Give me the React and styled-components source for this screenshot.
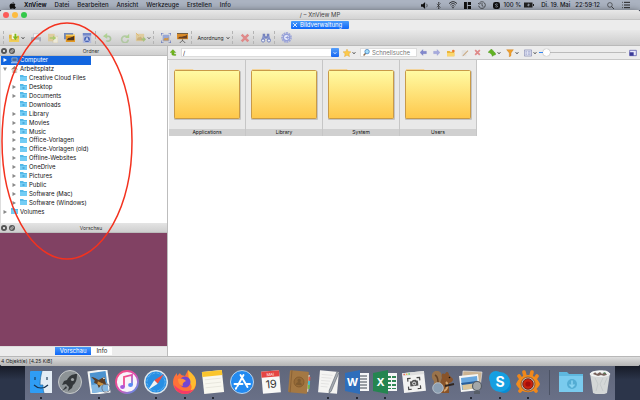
import React from 'react';
import styled, {createGlobalStyle} from 'styled-components';

const GlobalStyle = createGlobalStyle`
  * {
    box-sizing: border-box;
  }
  body {
    margin: 0;
    background: #2b3347;
    color: #222;
    font: 6px/8px Inter, 'Liberation Sans', sans-serif;
  }
  button, input {
    font: inherit;
    color: inherit;
    border: 0;
    padding: 0;
    margin: 0;
    background: none;
  }
  svg {
    display: block;
    flex: none;
  }
`;

const Screen = styled.div`
  position: relative;
  min-height: 100vh;
  display: flex;
  flex-direction: column;
  overflow: hidden;
`;
const MenuBar = styled.nav`
  height: 10px;
  display: flex;
  align-items: center;
  justify-content: space-between;
  padding: 0 10px 0 9px;
  background: #abb3c1;
  color: #14161c;
`;
const MenuGroup = styled.div`
  display: flex;
  align-items: center;
  gap: ${p => p.$gap || 8}px;
`;
const MenuItem = styled.button`
  font-weight: ${p => (p.$strong ? 700 : 500)};
  white-space: nowrap;
`;
const StatusText = styled.span`
  font-weight: 500;
  white-space: nowrap;
`;
const Window = styled.main`
  flex: 1;
  display: flex;
  flex-direction: column;
  background: #ececec;
  border-radius: 3px;
  overflow: hidden;
  box-shadow: 0 2px 8px #000a;
`;
const TitleBar = styled.header`
  height: 10px;
  display: grid;
  grid-template-columns: 1fr auto 1fr;
  align-items: center;
  padding: 0 3px;
  background: linear-gradient(#e8e8e8, #d3d3d3);
  border-bottom: 1px solid #c4c4c4;
`;
const Lights = styled.div`
  display: flex;
  gap: 3px;
`;
const Light = styled.button`
  width: 6px;
  height: 6px;
  border-radius: 50%;
  background: ${p => p.color};
`;
const Title = styled.h1`
  margin: 0;
  font-size: 6px;
  font-weight: 400;
  color: #444;
`;
const TabRow = styled.div`
  height: 10px;
  display: flex;
  justify-content: center;
  padding-top: 1px;
`;
const DocumentTab = styled.button`
  width: 58px;
  height: 8px;
  display: flex;
  align-items: center;
  gap: 3px;
  padding: 0 2px;
  border-radius: 1px;
  background: linear-gradient(#4a9cfb, #0f67f8);
  color: #fff;
`;
const Toolbar = styled.div`
  height: 16px;
  display: flex;
  align-items: center;
  padding-left: 3px;
  background: linear-gradient(#e9e9e9, #cccccc);
  border-bottom: 1px solid #b9b9b9;
`;
const Tool = styled.button`
  width: ${p => p.$width || 17}px;
  height: 12px;
  flex: none;
  display: flex;
  align-items: center;
  justify-content: center;
  gap: 1px;
  opacity: ${p => (p.$faded ? 0.7 : 1)};
`;
const ArrangeTool = styled(Tool)`
  font-size: 5px;
  gap: 2px;
`;
const Separator = styled.span`
  width: 4px;
  height: 13px;
  flex: none;
  border-left: 1px dashed #b4b4b4;
`;
const Body = styled.div`
  flex: 1;
  display: flex;
`;
const Sidebar = styled.aside`
  flex: 0 0 168px;
  display: flex;
  flex-direction: column;
  border-right: 1px solid #bdbdbd;
`;
const PanelTitle = styled.div`
  height: 10px;
  display: grid;
  grid-template-columns: 14px 1fr;
  align-items: center;
  padding-left: 1px;
  background: linear-gradient(#e4e4e4, #cfcfcf);
  border-bottom: 1px solid #bcbcbc;
`;
const PanelButtons = styled.div`
  display: flex;
  gap: 2px;
`;
const PanelName = styled.h2`
  margin: 0;
  text-align: center;
  font-size: 5px;
  font-weight: 400;
  color: #333;
`;
const TreeArea = styled.div`
  flex: 1;
  background: #fff;
  border-left: 1px solid #ddd;
`;
const Tree = styled.ul`
  height: 160px;
  width: 90px;
  margin: 0;
  padding: 0;
  list-style: none;
  display: grid;
  grid-auto-rows: 1fr;
`;
const TreeRow = styled.li`
  display: flex;
  background: ${p => (p.$selected ? '#1265df' : 'none')};
  color: ${p => (p.$selected ? '#fff' : '#111')};
`;
const TreeButton = styled.button`
  flex: 1;
  display: grid;
  grid-template-columns: 9px 8px 1fr;
  align-items: center;
  column-gap: 1px;
  padding-left: ${p => p.$level * 9}px;
  text-align: left;
  white-space: nowrap;
`;
const Preview = styled.div`
  height: 113px;
  background: #814163;
`;
const PreviewTabs = styled.div`
  height: 10px;
  display: flex;
  justify-content: center;
  align-items: flex-start;
  border-top: 1px solid #ddd;
`;
const PreviewTab = styled.button`
  height: 8px;
  padding: 0 5px;
  background: ${p => (p.$active ? 'linear-gradient(#4a9cfb, #0f67f8)' : '#fff')};
  color: ${p => (p.$active ? '#fff' : '#222')};
`;
const Browser = styled.section`
  flex: 1;
  min-width: 0;
  display: flex;
  flex-direction: column;
  background: #fff;
`;
const AddressBar = styled.div`
  height: 14px;
  display: flex;
  align-items: center;
  background: #ececec;
  border-bottom: 1px solid #c8c8c8;
`;
const PathBox = styled.div`
  flex: 1;
  height: 9px;
  margin-left: 3px;
  display: flex;
  background: #fff;
  border: 1px solid #dcdcdc;
`;
const PathInput = styled.input`
  flex: 1;
  min-width: 0;
  padding-left: 1px;
  outline: 0;
`;
const PathButton = styled.button`
  width: 8px;
  margin: -1px;
  display: grid;
  place-items: center;
  border-radius: 1px;
  background: linear-gradient(#569ffa, #1767f3);
  color: #fff;
`;
const SearchBox = styled.label`
  width: 57px;
  height: 9px;
  display: flex;
  align-items: center;
  gap: 2px;
  padding-left: 2px;
  background: #fff;
  border: 1px solid #dcdcdc;
`;
const SearchInput = styled.input`
  width: 43px;
  outline: 0;
  &::placeholder {
    color: #777;
    opacity: 1;
  }
`;
const SizeSlider = styled.input`
  appearance: none;
  width: 87px;
  height: 7px;
  background: linear-gradient(#2f86f6, #2f86f6) 0 3px / 8px 1px no-repeat,
    linear-gradient(#bbb, #bbb) 0 3px / 100% 1px no-repeat;
  &::-webkit-slider-thumb {
    appearance: none;
    width: 7px;
    height: 7px;
    border-radius: 50%;
    background: #fff;
    box-shadow: 0 0 1px #777;
  }
`;
const FileGrid = styled.div`
  display: flex;
  flex-wrap: wrap;
  padding-left: 1px;
`;
const FileCell = styled.button`
  width: 77px;
  height: 76px;
  display: flex;
  flex-direction: column;
  align-items: center;
  padding-top: 8px;
  background: #e9e9e9;
  border-right: 1px solid #c6c6c6;
`;
const FileName = styled.span`
  width: 100%;
  height: 7px;
  margin-top: auto;
  background: #d0d0d0;
  color: #111;
  font-size: 5px;
  line-height: 7px;
  text-align: center;
`;
const StatusBar = styled.footer`
  height: 10px;
  padding-left: 1px;
  background: linear-gradient(#dedede, #b3b3b3);
  border-top: 1px solid #b8b8b8;
  font-size: 5px;
`;
const DockArea = styled.div`
  height: 34px;
  padding: 0 25px;
  background: linear-gradient(#171b27, #2c354a 14px);
`;
const Dock = styled.div`
  height: 34px;
  display: flex;
  position: relative;
  padding: 0 1px 0 2px;
  background: linear-gradient(#5f667a, #697087);
`;
const DockItem = styled.button`
  flex: 1;
  display: flex;
  flex-direction: column;
  align-items: center;
  justify-content: space-between;
  padding: 4px 0 1px;
`;
const DockDot = styled.span`
  width: 2px;
  height: 2px;
  border-radius: 50%;
  background: ${p => (p.$running ? '#10131b' : 'transparent')};
`;
const DockDivider = styled.span`
  width: 14px;
  margin: 4px 0 5px;
  display: flex;
  justify-content: center;
  &::before {
    content: '';
    border-left: 1px solid #4b5264;
  }
`;
// hand-drawn ring, lies over both side panels
const Ring = styled.svg`
  position: absolute;
  left: 0;
  top: 20px;
  pointer-events: none;
`;

function Icon({size = 10, box = 12, children}) {
  return (
    <svg width={size} height={size} viewBox={`0 0 ${box} ${box}`} fill="none" aria-hidden="true">
      {children}
    </svg>
  );
}
function Chevron() {
  return (
    <svg width="4" height="4" viewBox="0 0 4 4" fill="none" stroke="currentColor" aria-hidden="true">
      <path d="M.7 1.3 2 2.7 3.3 1.3" strokeWidth=".9" />
    </svg>
  );
}

const glyphs = {
  open: <><path d="M0 3h4l1 1h6v7H0z" fill="#dfb23f" /><path d="M3 1h6v7H3z" fill="#f4f3e5" /><path d="M6 2v3H4l3 4 3-4H8V2z" fill="#7eb81d" /><path d="M0 7h2v2h7V7h2v4H0z" fill="#f2cf58" /></>,
  print: <><path d="M3 1h6v5H3z" fill="#fff" stroke="#8f95a8" strokeWidth=".5" /><path d="M0 5h12v5H0z" fill="#9296a8" /><path d="M2 8h8v3H2z" fill="#e5e6ef" /></>,
  acquire: <><path d="M0 1h8v9H0z" fill="#e0c583" /><path d="M6 4h6v8H6z" fill="#f8f2dd" stroke="#c9b47b" strokeWidth=".5" /><path d="M2 5h4V3l4 3-4 3V7H2z" fill="#99c443" /></>,
  batch: <><path d="M0 1h10v7H0z" fill="#7189b9" /><path d="M2 3h10v8H2z" fill="#e49923" /><path d="M3 9c2-4 3-2 4-3s2 0 4-2v5z" fill="#4c351f" /><path d="M2 3h10v1H2z" fill="#ffe06b" /></>,
  rename: <><path d="M1 0h10v12H1z" fill="#b2badd" /><path d="M1 0h10v3H1z" fill="#7288c8" /><circle cx="6" cy="7.5" r="3.4" fill="#4965b8" /><path d="m4.5 9.5 1.5-4 1.5 4M5 8.3h2" stroke="#fff" strokeWidth=".8" /></>,
  undo: <><path d="M4 4h3a3 3 0 1 1-3 5" stroke="#9bbd87" strokeWidth="2" /><path d="M5 0v7L0 4z" fill="#9ccc73" /></>,
  redo: <><path d="M9 5A4 4 0 1 0 10 8" stroke="#a3c48e" strokeWidth="2" /><path d="M11 1v5H6z" fill="#9ccc73" /></>,
  convert: <><path d="M1 2h9v8H1z" fill="#dfc584" /><path d="M2 8c2-4 3-1 4-3l4 4H2z" fill="#c99f58" /><path d="M7 7h2V5l3 3-3 3V9H7z" fill="#8fb955" /><path d="m1 1 3 3" stroke="#e2a33c" /></>,
  full: <><path d="M2 2h8v8H2z" fill="#98a7d5" /><path d="M3 8c2-4 3 0 6-3v4H3z" fill="#cf9749" /><path d="M0 3V0h3M9 0h3v3M12 9v3H9M3 12H0V9" stroke="#5a6fbe" strokeWidth="1.4" /></>,
  slides: <><path d="M0 1h12v7H0z" fill="#d98a27" /><path d="M0 1h12v1H0z" fill="#53504d" /><path d="M1 7c2-3 4-1 5-2s3 0 5-2v4z" fill="#684023" /><path d="M6 8v2M3 12l3-3 3 3" stroke="#626262" /></>,
  remove: <path d="m2 2 8 8M10 2l-8 8" stroke="#df8a8a" strokeWidth="3" />,
  find: <><path d="M2 1h3v5H2zM7 1h3v5H7zM5 4h2v3H5z" fill="#7482bd" /><path d="M0 9 2 4h2l1 5zM7 9l1-5h2l2 5z" fill="#8b98cf" /><circle cx="2.5" cy="9" r="1.9" fill="#e8ebfa" stroke="#6878b8" /><circle cx="9.5" cy="9" r="1.9" fill="#e8ebfa" stroke="#6878b8" /></>,
  gear: <><circle cx="6" cy="6" r="4.8" stroke="#a0a8d8" strokeWidth="2.2" strokeDasharray="2 .7" /><circle cx="6" cy="6" r="3.4" fill="#e9ecfc" stroke="#949fda" strokeWidth="1.4" /><path d="M5 6h3M6.5 4.5 8 6 6.5 7.5" stroke="#8994d4" /></>,
  up: <path d="M5 1 0 6h3v3c0 2 3 2 7 2V9H7V6h3z" fill="#71b51d" stroke="#4a8a16" strokeWidth=".5" />,
  star: <path d="m6 0 1.8 3.8 4.2.5L9 7.2l.8 4.3L6 9.4l-3.8 2.1L3 7.2 0 4.3l4.2-.5z" fill="#fbc94b" stroke="#da9a29" strokeWidth=".5" />,
  zoom: <><path d="m1 11 4-4" stroke="#8d6a48" strokeWidth="2.4" /><circle cx="7" cy="4.5" r="3.8" fill="#a4ddf8" stroke="#3879bd" strokeWidth="1.2" /></>,
  back: <path d="M0 6 5 1v3h6v4H5v3z" fill="#8288cd" stroke="#6870b6" strokeWidth=".5" />,
  next: <path d="M12 6 7 1v3H1v4h6v3z" fill="#a6aadd" stroke="#8b91cc" strokeWidth=".5" />,
  folder: <><path d="M0 3h4l1 1h6v7H0z" fill="#eab63d" /><path d="M0 6h11v5H0z" fill="#fbd76f" /><circle cx="9.5" cy="3" r="2" fill="#ec7a2e" /></>,
  edit: <><path d="M1 2h7v9H1z" fill="#e2e2e2" /><path d="m3 9 7-7 1 1-7 7-2 1z" fill="#c9a67c" /></>,
  sort: <path d="m5 0-5 5 3 1 3 3v2l6-3-2-3-1-1-2-2z" fill="#62b223" stroke="#43881a" strokeWidth=".5" />,
  filter: <path d="M1 1h10L7.5 6v4L5 12V6z" fill="#f0a02b" stroke="#c77818" strokeWidth=".6" />,
  list: <><path d="M.5 1.5h11v9H.5z" fill="#eef0fb" stroke="#777ca8" /><path d="M2 4h3M6 4h4M2 6h3M6 6h4M2 8h3M6 8h4" stroke="#747bb1" strokeWidth=".8" /></>,
  panel: <><path d="M1 2h10v8H1z" fill="#e8e8fb" stroke="#4545a0" /><path d="M1 5h6v5H1z" fill="#3a3a98" /></>,
};

function Glyph({name, size}) {
  return <Icon size={size}>{glyphs[name]}</Icon>;
}

const tree = [
  {name: 'Computer', level: 0, arrow: 'right', icon: 'computer', selected: true},
  {name: 'Arbeitsplatz', level: 0, arrow: 'down', icon: 'home'},
  {name: 'Creative Cloud Files', level: 1},
  {name: 'Desktop', level: 1, arrow: 'right', mark: true},
  {name: 'Documents', level: 1, arrow: 'right', mark: true},
  {name: 'Downloads', level: 1, mark: true},
  {name: 'Library', level: 1, arrow: 'right', mark: true},
  {name: 'Movies', level: 1, arrow: 'right', mark: true},
  {name: 'Music', level: 1, arrow: 'right', mark: true},
  {name: 'Office-Vorlagen', level: 1, arrow: 'right'},
  {name: 'Office-Vorlagen (old)', level: 1, arrow: 'right'},
  {name: 'Offline-Websites', level: 1, arrow: 'right'},
  {name: 'OneDrive', level: 1, arrow: 'right', mark: true},
  {name: 'Pictures', level: 1, arrow: 'right', mark: true},
  {name: 'Public', level: 1, arrow: 'right', mark: true},
  {name: 'Software (Mac)', level: 1, arrow: 'right'},
  {name: 'Software (Windows)', level: 1, arrow: 'right'},
  {name: 'Volumes', level: 0, arrow: 'right'},
];

function TreeIcon({icon, mark}) {
  if (icon === 'computer') {
    return <Icon size={7} box={8}><path d="M1 1h6v4H1z" fill="#476b9c" stroke="#c2d4ee" strokeWidth=".6" /><path d="M0 6h8v1H0z" fill="#c2d4ee" /></Icon>;
  }
  if (icon === 'home') {
    return <Icon size={7} box={8}><path d="M0 4 4 0l4 4z" fill="#9c8072" /><path d="M1 4h6v4H1z" fill="#d9d4cb" /><path d="M3 5h2v3H3z" fill="#8a7566" /></Icon>;
  }
  return (
    <Icon size={7} box={7}>
      <path d="M0 0h3l1 1h3v5H0z" fill="#55b9e8" />
      <path d="M0 2h7v4H0z" fill="#74cdf5" />
      {mark && <path d="M2.500 3h2v2h-2z" fill="#4fabdc" />}
    </Icon>
  );
}
function TreeArrow({arrow, selected}) {
  if (!arrow) return <span />;
  return (
    <Icon size={8} box={8}>
      <path d={arrow === 'down' ? 'M2 2.5h4L4 6z' : 'M2.5 2v4L6 4z'} fill={selected ? '#fff' : '#888'} />
    </Icon>
  );
}
function PanelHeader({name}) {
  return (
    <PanelTitle>
      <PanelButtons>
        <button aria-label={name + ' schließen'}>
          <Icon size={6}><circle cx="6" cy="6" r="6" fill="#555" /><path d="m4 4 4 4M8 4l-4 4" stroke="#fff" strokeWidth="1.5" /></Icon>
        </button>
        <button aria-label={name + ' lösen'}>
          <Icon size={6}><circle cx="6" cy="6" r="6" fill="#555" /><path d="M3.5 5.5h3v3h-3zM5.5 3.5h3v3" stroke="#fff" /></Icon>
        </button>
      </PanelButtons>
      <PanelName>{name}</PanelName>
    </PanelTitle>
  );
}
function BigFolder() {
  return (
    <svg width="68" height="53" viewBox="0 0 68 53" aria-hidden="true">
      <defs>
        <linearGradient id="folder" x2="0" y2="1">
          <stop stopColor="#fffba4" />
          <stop offset="1" stopColor="#fec74a" />
        </linearGradient>
      </defs>
      <path d="M2 3V1h18l1 2z" fill="#f3d49c" />
      <rect x="1" y="3" width="67" height="49" rx="1" fill="#aaa" opacity=".6" />
      <rect x="1.5" y="2.5" width="65" height="48" rx="1" fill="url(#folder)" stroke="#c89a48" />
    </svg>
  );
}

const dockIcons = [
  {name: 'Finder', running: true, art: <><rect x="1" y="1" width="22" height="22" rx="1" fill="#2f9df4" /><path d="M13 1h10v22h-8c-1-3-1-6-1-8h-3c0-6 1-10 2-14z" fill="#e4edf5" /><path d="M6 7v3M18 7v3M5 15c4 4 10 4 14 0" stroke="#17334f" strokeWidth="1.1" /><path d="M13 1c-1 4-2 8-2 14h3c0 2 0 5 1 8" stroke="#26689e" strokeWidth=".7" /></>},
  {name: 'Launchpad', art: <><circle cx="12" cy="12" r="11.5" fill="#8d9396" stroke="#c6c9cb" /><path d="M19 4c-5 0-8 2-10 6l-3 1-2 4 4-1 3 3-1 4 4-3 1-3c3-2 4-6 4-11z" fill="#34383b" /><circle cx="14.5" cy="9.5" r="1.6" fill="#9ca1a3" /><path d="m8 16-4 5 5-3z" fill="#34383b" /></>},
  {name: 'Mail', running: true, art: <g transform="rotate(-8 12 12)"><path d="M2 0h20v24H2z" fill="#f4f5f4" /><path d="M4 2h16v20H4z" fill="#4c93cf" /><path d="M4 14h16v8H4z" fill="#86b9e2" /><path d="M5 6c3 0 5 3 7 4l5-2c2 0 2 2 1 3l1 5-4-2-4 4-1-4-3-2 1-2z" fill="#5a3d25" /><path d="m11 11 6 4-4 1-3-2z" fill="#c8913f" /><path d="m16 8 3 1-2 1z" fill="#f2eee2" /><circle cx="18" cy="19" r="4" stroke="#626a7d" strokeWidth=".8" /></g>},
  {name: 'iTunes', art: <><circle cx="12" cy="12" r="11" fill="#f9f4fa" stroke="url(#tunes)" strokeWidth="1.8" /><path d="M9 17V7l8-2v10" stroke="url(#tunes)" strokeWidth="1.8" /><ellipse cx="7.5" cy="17" rx="2.4" ry="1.9" fill="#a659db" /><ellipse cx="15.5" cy="15" rx="2.4" ry="1.9" fill="#5a8cf4" /></>},
  {name: 'Safari', running: true, art: <><circle cx="12" cy="12" r="11.3" fill="#278fe4" stroke="#dce4ea" strokeWidth="1.5" /><circle cx="12" cy="12" r="9" stroke="#9ad0f5" strokeWidth="1.2" strokeDasharray=".4 1" /><path d="m20 4-6.3 9.7-3.4-3.4z" fill="#f04d42" /><path d="m4 20 6.3-9.7 3.4 3.4z" fill="#f0f2f3" /></>},
  {name: 'Firefox', running: true, art: <><path d="M15 0c2 3 7 6 8 11 1 7-4 13-11 13S0 19 0 12c0-4 2-7 4-9v3l3-3c1 3 3 2 5 3z" fill="#ff7139" /><path d="M15 0c3 3 8 6 8 12 0 5-3 9-7 11 4-5 3-8 0-11z" fill="#ffbd2e" /><path d="M1 15c1 6 6 9 11 9 4 0 7-2 9-5-8 4-14 2-20-4z" fill="#f43b68" /><circle cx="12" cy="12" r="5.5" fill="#7446cf" /><path d="M5 9c4-1 6 0 8 2-3 1-4 3-3 5-3 0-5-3-5-7z" fill="#ff9238" /></>},
  {name: 'Notizen', running: true, art: <g transform="rotate(-6 12 12)"><path d="M2 1h20v22H2z" fill="#f8f7ef" /><path d="M2 1h20v5H2z" fill="#fac52d" /><path d="M4 9h16M4 13h16M4 17h16" stroke="#d8d6cc" strokeWidth=".5" /></g>},
  {name: 'App Store', art: <><circle cx="12" cy="12" r="11.5" fill="#238af0" stroke="#dceaf5" strokeWidth=".8" /><path d="m13.5 5-6 11M10.5 5l7 12M4.5 14h8M16 14h4M6.5 17.5l-.7 1.2" stroke="#fff" strokeWidth="1.9" strokeLinecap="round" /></>},
  {name: 'Kalender', art: <g transform="rotate(-5 12 12)"><path d="M3 1h18v22H3z" fill="#f8f8f6" /><path d="M3 1h18v6H3z" fill="#e54542" /><text x="12" y="6" fontSize="4" textAnchor="middle" fill="#fff">MAI</text><text x="12" y="18" fontSize="11" textAnchor="middle" fill="#333">19</text></g>},
  {name: 'Kontakte', art: <g transform="rotate(5 12 12)"><path d="M20 4h2v17h-2z" fill="#f2eee4" /><path d="M21 6h2v4h-2z" fill="#e05b47" /><path d="M21 10h2v4h-2z" fill="#48bdd0" /><path d="M21 14h2v4h-2z" fill="#75bd4c" /><rect x="2" y="1" width="19" height="22" rx="1" fill="#a47843" /><path d="M4 1v22" stroke="#805a30" strokeWidth=".7" /><circle cx="12" cy="12" r="5" fill="#966b38" stroke="#775126" strokeWidth=".6" /><circle cx="12" cy="10.5" r="1.7" fill="#7f5b30" /><path d="M9 15c0-4 6-4 6 0z" fill="#7f5b30" /></g>},
  {name: 'TextEdit', running: true, art: <g transform="rotate(5 12 12)"><path d="M3 1h19v22H3z" fill="#f4f4f2" /><path d="M5 5h11M5 8h10M5 11h9M5 14h8M5 17h7" stroke="#d2d2d2" strokeWidth=".5" /><path d="m20 1 2 1-6 19-2 2v-3z" fill="#a6abb2" stroke="#5d6670" strokeWidth=".6" /></g>},
  {name: 'Word', running: true, art: <><path d="M13 3h11v18H13z" fill="#f4f5f6" /><path d="M14 6h8M14 9h8M14 12h8M14 15h8M14 18h8" stroke="#414852" strokeWidth="1" /><path d="m0 3 15-3v24L0 21z" fill="#2e6ebb" /><text x="7.5" y="16" fontSize="11" fontWeight="700" textAnchor="middle" fill="#fff">W</text></>},
  {name: 'Excel', running: true, art: <><path d="M13 3h11v18H13z" fill="#f4f5f6" /><path d="M15 6h3v2h-3zM19 6h4v2h-4zM15 10h3v2h-3zM19 10h4v2h-4zM15 14h3v2h-3zM19 14h4v2h-4zM15 18h3v1h-3zM19 18h4v1h-4z" fill="#318754" /><path d="m0 3 15-3v24L0 21z" fill="#258550" /><text x="7.5" y="16" fontSize="11" fontWeight="700" textAnchor="middle" fill="#fff">X</text></>},
  {name: 'Bildschirmfoto', art: <g transform="rotate(-6 12 12)"><path d="M1 2h22v20H1z" fill="#f2f2f1" /><path d="M1 2h22v3H1z" fill="#dedede" /><circle cx="3" cy="3.5" r=".8" fill="#ef594f" /><circle cx="5.5" cy="3.5" r=".8" fill="#f3bc36" /><circle cx="8" cy="3.5" r=".8" fill="#4fc849" /><path d="M6 11V8h3M15 8h3v3M18 16v3h-3M9 19H6v-3" stroke="#464646" strokeWidth="1.2" /><path d="M8 11h2l1-1h3l1 1h1v5H8z" fill="#555" /><circle cx="12" cy="13.5" r="1.5" stroke="#fff" strokeWidth=".8" /></g>},
  {name: 'SquirrelMail', art: <><path d="M8 23C1 18 3 14 3 11-1 7 1 0 6 1c6 0 5 7 4 10z" fill="#99734b" /><path d="M4 5c4 2 2 6 4 11" stroke="#624227" strokeWidth="1.5" /><path d="M11 8c-1-5 1-5 3-4 2-4 4-1 4 1l4 4c0 3-3 4-4 4v10H8c0-6 1-10 3-15z" fill="#885329" /><path d="M15 12c3 3 1 8-2 9" stroke="#d4a56d" strokeWidth="2" /><circle cx="18.5" cy="7.5" r=".8" fill="#19120c" /><path d="m14 16 9-2" stroke="#30251f" strokeWidth="2" /><circle cx="7" cy="18" r="5.3" fill="#8c9fb2" stroke="#c1ccd4" strokeWidth=".8" /></>},
  {name: 'Vorschau', running: true, art: <><path d="m4 1 19 1-2 16-18-2z" fill="#cbb392" stroke="#eee" strokeWidth=".6" /><path d="m0 6 19-2 2 16-19 2z" fill="#f6f6f4" /><path d="m2 8 16-2 1 12-16 2z" fill="#67a7df" /><path d="m3 14 16-2v6L4 20z" fill="#dbc69a" /><path d="m2 13 16-2v2L3 15z" fill="#285f9b" /><circle cx="18" cy="16" r="4.5" fill="#a3a7a9" stroke="#555c66" strokeWidth="1.2" /><path d="M15 21h6v3h-6z" fill="#575e68" /></>},
  {name: 'Skype', running: true, art: <><circle cx="8" cy="8" r="7" fill="#16a0e2" /><circle cx="16" cy="16" r="7" fill="#078cd4" /><circle cx="12" cy="12" r="10" fill="#159fe1" /><text x="12" y="17" fontSize="14" fontWeight="700" textAnchor="middle" fill="#fff">S</text></>},
  {name: 'XnView', running: true, art: <><path d="M5 9 3 6M9 6 8 2M15 6l1-4M19 9l2-3M6 19l-2 2M18 19l2 2" stroke="#f0871a" strokeWidth="3.6" strokeLinecap="round" /><path d="M0 14c5-12 19-12 24 0-5 11-19 11-24 0z" fill="#f28c1c" /><circle cx="12" cy="14" r="7" fill="#b9b3b0" stroke="#8a4a1c" strokeWidth=".8" /><circle cx="12" cy="14" r="5.2" fill="#c9230f" stroke="#7a2413" strokeWidth="1" /><circle cx="12" cy="14" r="2.6" fill="#a40d0b" /></>},
];
const dockPlaces = [
  {name: 'Downloads', art: <><path d="M0 4V2h8l2 2h14v18H0z" fill="#5eb7de" /><path d="M0 6h24v16H0z" fill="#7acbee" /><circle cx="13" cy="14" r="5" fill="#54add4" /><path d="M13 10.5v6M10.5 14.5l2.5 2.5 2.5-2.5" stroke="#89d4f2" strokeWidth="1.5" /></>},
  {name: 'Papierkorb', art: <><path d="M2 3h20l-3 20c-4 2-10 2-14 0z" fill="#d4d7d7" /><path d="M3 3c1-3 17-4 18 0l-1 3H4z" fill="#eceeed" /><path d="m5 4 2-2 2 2 3-2 2 2 3-2 2 3-3 1-3-1-3 1z" fill="#77625b" /><path d="m15 3 2-1 1 2z" fill="#408653" /><path d="m7 8 3 6-2 7M15 8l-3 6 3 7M19 8l-3 7" stroke="#c0c5c6" strokeWidth=".8" /><ellipse cx="12" cy="4" rx="10" ry="2.5" stroke="#f9fafa" strokeWidth=".8" /></>},
];

function DockEntry({item}) {
  return (
    <DockItem aria-label={item.name}>
      <Icon size={24} box={24}>{item.art}</Icon>
      <DockDot $running={item.running} />
    </DockItem>
  );
}

function TopMenu() {
  return (
    <MenuBar>
      <MenuGroup>
        <MenuItem aria-label="Apple">
          <Icon size={7}><path d="M6 3c3-1 4 0 5 1-2 2-1 4 1 5-1 2-2 3-3 3s-1-1-3-1-2 1-3 1S1 9 1 7c0-3 2-5 5-4zM6 2c0-1 1-2 2-2 0 1-1 2-2 2z" fill="#111" /></Icon>
        </MenuItem>
        <MenuItem $strong>XnView</MenuItem>
        {['Datei', 'Bearbeiten', 'Ansicht', 'Werkzeuge', 'Erstellen', 'Info'].map(name => <MenuItem key={name}>{name}</MenuItem>)}
      </MenuGroup>
      <MenuGroup $gap={7}>
        <Icon size={7}><path d="M0 4h3l4-4v12L3 8H0z" fill="#111" /><path d="M9 3c2 2 2 4 0 6" stroke="#111" /></Icon>
        <Icon size={7}><path d="m3 3 6 6-3 3V0l3 3-6 6" stroke="#222" /></Icon>
        <Icon size={8}><path d="M0 4c4-4 8-4 12 0M2 6c3-3 5-3 8 0M4 8c2-1.5 2-1.5 4 0" stroke="#111" strokeWidth="1.2" /><circle cx="6" cy="10" r="1" fill="#111" /></Icon>
        <Icon size={7}><path d="M0 0h5v12H0zM6.500 0H12v5H6.500zM6.500 7H12v5H6.500z" fill="#111" /></Icon>
        <Icon size={8}><path d="M2 3a5 5 0 1 1-1 4M0 3l2 2 2-2M6 3v4l2 1" stroke="#222" /></Icon>
        <MenuGroup $gap={3}>
          <Icon size={7}><rect width="12" height="12" rx="4" fill="#111" /><path d="M8 4C4 2 3 5 6 6s2 4-2 2" stroke="#abb3c1" strokeWidth="1.2" /></Icon>
          <StatusText>100 %</StatusText>
          <svg width="10" height="6" viewBox="0 0 20 12" aria-hidden="true">
            <path d="M0 1h17v10H0zM18 4h2v4h-2z" fill="#222" />
            <path d="m10 2-4 5h3l-1 3 4-5H9z" fill="#abb3c1" />
          </svg>
        </MenuGroup>
        <MenuGroup $gap={5}>
          <StatusText>Di. 19. Mai</StatusText>
          <StatusText>22:59:12</StatusText>
        </MenuGroup>
        <MenuGroup>
          <Icon size={7}><circle cx="5" cy="5" r="4" stroke="#222" /><path d="m8 8 4 4" stroke="#222" strokeWidth="1.3" /></Icon>
          <Icon size={8}><path d="M0 2h1M3 2h9M0 6h1M3 6h9M0 10h1M3 10h9" stroke="#222" strokeWidth="1.5" /></Icon>
        </MenuGroup>
      </MenuGroup>
    </MenuBar>
  );
}
function MainToolbar() {
  return (
    <Toolbar>
      <Separator />
      <Tool $width={20} aria-label="Öffnen"><Glyph name="open" size={11} /><Chevron /></Tool>
      <Tool $faded aria-label="Drucken"><Glyph name="print" /></Tool>
      <Tool $faded aria-label="Importieren"><Glyph name="acquire" /></Tool>
      <Tool aria-label="Stapelverarbeitung"><Glyph name="batch" size={11} /></Tool>
      <Tool aria-label="Umbenennen"><Glyph name="rename" /></Tool>
      <Separator />
      <Tool $faded aria-label="Links drehen"><Glyph name="undo" /></Tool>
      <Tool $faded aria-label="Rechts drehen"><Glyph name="redo" /></Tool>
      <Tool $width={20} $faded aria-label="Konvertieren"><Glyph name="convert" size={11} /><Chevron /></Tool>
      <Separator />
      <Tool aria-label="Vollbild"><Glyph name="full" /></Tool>
      <Tool aria-label="Diashow"><Glyph name="slides" size={11} /></Tool>
      <Separator />
      <ArrangeTool $width={37}>Anordnung <Chevron /></ArrangeTool>
      <Separator />
      <Tool aria-label="Löschen"><Glyph name="remove" /></Tool>
      <Separator />
      <Tool aria-label="Suchen"><Glyph name="find" /></Tool>
      <Separator />
      <Tool aria-label="Einstellungen"><Glyph name="gear" size={11} /></Tool>
    </Toolbar>
  );
}

export default function App() {
  return (
    <Screen>
      <GlobalStyle />
      <TopMenu />
      <Window>
        <TitleBar>
          <Lights>
            <Light color="#fc5b57" aria-label="Schließen" />
            <Light color="#fdbc40" aria-label="Minimieren" />
            <Light color="#34c84a" aria-label="Maximieren" />
          </Lights>
          <Title>/ – XnView MP</Title>
        </TitleBar>
        <TabRow>
          <DocumentTab>
            <Icon size={4} box={4}><path d="m0 0 4 4M4 0 0 4" stroke="#fff" strokeWidth=".8" /></Icon>
            Bildverwaltung
          </DocumentTab>
        </TabRow>
        <MainToolbar />
        <Body>
          <Sidebar>
            <PanelHeader name="Ordner" />
            <TreeArea>
              <Tree>
                {tree.map(item => (
                  <TreeRow key={item.name} $selected={item.selected}>
                    <TreeButton $level={item.level}>
                      <TreeArrow arrow={item.arrow} selected={item.selected} />
                      <TreeIcon icon={item.icon} mark={item.mark} />
                      {item.name}
                    </TreeButton>
                  </TreeRow>
                ))}
              </Tree>
            </TreeArea>
            <PanelHeader name="Vorschau" />
            <Preview />
            <PreviewTabs>
              <PreviewTab $active>Vorschau</PreviewTab>
              <PreviewTab>Info</PreviewTab>
            </PreviewTabs>
          </Sidebar>
          <Browser>
            <AddressBar>
              <Tool $width={10} aria-label="Nach oben"><Glyph name="up" size={7} /></Tool>
              <PathBox>
                <PathInput aria-label="Pfad" defaultValue="/" />
                <PathButton aria-label="Verlauf"><Chevron /></PathButton>
              </PathBox>
              <Tool $width={21} aria-label="Favoriten"><Glyph name="star" size={8} /><Chevron /></Tool>
              <SearchBox>
                <Glyph name="zoom" size={7} />
                <SearchInput aria-label="Schnellsuche" placeholder="Schnellsuche" />
              </SearchBox>
              <Tool $width={12} aria-label="Zurück"><Glyph name="back" size={7} /></Tool>
              <Tool $width={14} aria-label="Vor"><Glyph name="next" size={7} /></Tool>
              <Tool $width={15} aria-label="Neuer Ordner"><Glyph name="folder" size={8} /></Tool>
              <Tool $width={13} aria-label="Bearbeiten"><Glyph name="edit" size={8} /></Tool>
              <Tool $width={13} aria-label="Löschen"><Glyph name="remove" size={7} /></Tool>
              <Tool $width={20} aria-label="Sortieren"><Glyph name="sort" size={8} /><Chevron /></Tool>
              <Tool $width={17} aria-label="Filter"><Glyph name="filter" size={8} /><Chevron /></Tool>
              <Tool $width={18} aria-label="Ansicht"><Glyph name="list" size={8} /><Chevron /></Tool>
              <SizeSlider type="range" aria-label="Vorschaugröße" defaultValue="5" />
              <Tool $width={14} aria-label="Layout"><Glyph name="panel" size={8} /></Tool>
            </AddressBar>
            <FileGrid>
              {['Applications', 'Library', 'System', 'Users'].map(name => (
                <FileCell key={name}>
                  <BigFolder />
                  <FileName>{name}</FileName>
                </FileCell>
              ))}
            </FileGrid>
          </Browser>
        </Body>
        <StatusBar>4 Objekt(e) [4.25 KiB]</StatusBar>
      </Window>
      <DockArea>
        <Dock>
          <svg width="0" height="0" aria-hidden="true">
            <linearGradient id="tunes" x2="1" y2="1">
              <stop stopColor="#f84d78" />
              <stop offset=".5" stopColor="#e04fae" />
              <stop offset="1" stopColor="#4a9af5" />
            </linearGradient>
          </svg>
          {dockIcons.map(item => <DockEntry key={item.name} item={item} />)}
          <DockDivider />
          {dockPlaces.map(item => <DockEntry key={item.name} item={item} />)}
        </Dock>
      </DockArea>
      <Ring width="136" height="242" viewBox="0 0 136 242" fill="none" aria-hidden="true">
        <ellipse cx="67" cy="121" rx="65" ry="118" stroke="#f3321f" strokeWidth="1.5" />
      </Ring>
    </Screen>
  );
}
